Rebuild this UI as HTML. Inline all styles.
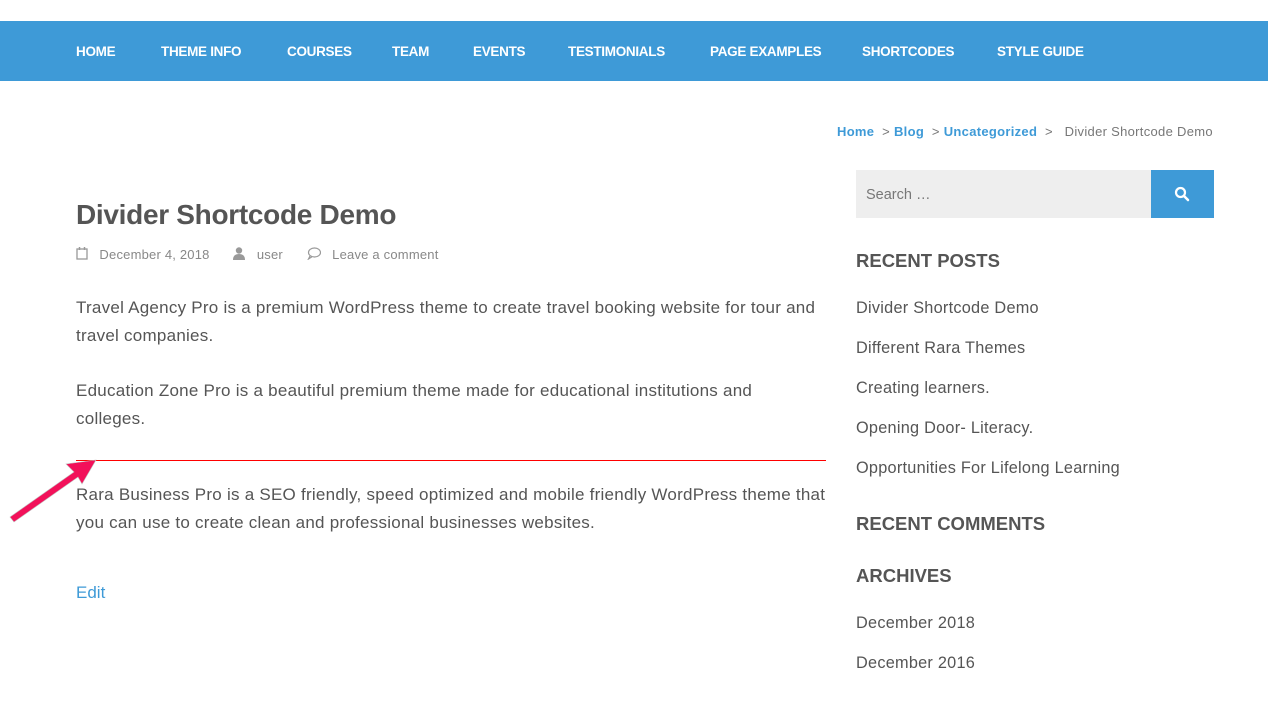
<!DOCTYPE html>
<html><head><meta charset="utf-8"><style>
*{margin:0;padding:0;box-sizing:border-box}
body{width:1268px;height:709px;overflow:hidden;background:#fff;font-family:"Liberation Sans",sans-serif;color:#555;position:relative}
.nav{position:absolute;top:21px;left:0;width:1268px;height:60px;background:#3e9ad7}
.nav span{position:absolute;top:23px;color:#fff;font-weight:bold;font-size:13.5px;letter-spacing:-0.3px}
.a{position:absolute;white-space:nowrap}
.bc{top:124px;font-size:13px;letter-spacing:0.3px}
.blue{color:#3e9ad7}
p.a{font-size:17px;line-height:28px;color:#555;letter-spacing:0.25px}
.side{font-size:16.3px;color:#555;letter-spacing:0.25px}
h2.a{font-size:18.5px;font-weight:bold;color:#555}
</style></head><body>
<div class="nav">
<span style="left:76px">HOME</span><span style="left:161px">THEME INFO</span><span style="left:287px">COURSES</span><span style="left:392px">TEAM</span><span style="left:473px">EVENTS</span><span style="left:568px">TESTIMONIALS</span><span style="left:710px">PAGE EXAMPLES</span><span style="left:862px">SHORTCODES</span><span style="left:997px">STYLE GUIDE</span>
</div>
<div class="a bc" style="left:837px"><b class="blue">Home</b> <span style="color:#777">&nbsp;&gt;</span> <b class="blue">Blog</b> <span style="color:#777">&nbsp;&gt;</span> <b class="blue">Uncategorized</b> <span style="color:#777">&nbsp;&gt;&nbsp;&nbsp; Divider Shortcode Demo</span></div>
<div class="a" style="left:76px;top:199px;font-size:28px;font-weight:bold;color:#555;letter-spacing:-0.3px">Divider Shortcode Demo</div>
<div class="a" style="left:76px;top:247px;font-size:13px;color:#888;letter-spacing:0.2px">
<svg width="12" height="13" style="vertical-align:-1px"><rect x="1" y="2" width="10" height="10" fill="none" stroke="#999" stroke-width="1.3"/><line x1="3.5" y1="0" x2="3.5" y2="3" stroke="#999" stroke-width="1.5"/><line x1="8.5" y1="0" x2="8.5" y2="3" stroke="#999" stroke-width="1.5"/></svg>&nbsp;&nbsp; December 4, 2018
<span style="display:inline-block;width:20px"></span><svg width="12" height="13" style="vertical-align:-1px"><circle cx="6" cy="3.5" r="3.2" fill="#999"/><path d="M0 13 Q0 7 6 7 Q12 7 12 13Z" fill="#999"/></svg>&nbsp;&nbsp; user
<span style="display:inline-block;width:20px"></span><svg width="14" height="13" style="vertical-align:-1px"><ellipse cx="7.5" cy="5.5" rx="6" ry="4.5" fill="none" stroke="#999" stroke-width="1.2"/><path d="M3 9 L1.5 12 L5 9.8" fill="none" stroke="#999" stroke-width="1.2"/></svg>&nbsp;&nbsp; Leave a comment</div>
<p class="a" style="left:76px;top:294px">Travel Agency Pro is a premium WordPress theme to create travel booking website for tour and<br>travel companies.</p>
<p class="a" style="left:76px;top:377px">Education Zone Pro is a beautiful premium theme made for educational institutions and<br>colleges.</p>
<div class="a" style="left:76px;top:460px;width:750px;height:1px;background:#f00"></div>
<svg class="a" style="left:0;top:450px" width="100" height="80"><path d="M10 67 L74 22 L66 14 L96 10 L82 34 L78 27 L14 72 Z" fill="#f2115a" stroke="#c0c0c0" stroke-width="0.6"/></svg>
<p class="a" style="left:76px;top:481px">Rara Business Pro is a SEO friendly, speed optimized and mobile friendly WordPress theme that<br>you can use to create clean and professional businesses websites.</p>
<div class="a blue" style="left:76px;top:583px;font-size:17px">Edit</div>
<div class="a" style="left:856px;top:170px;width:295px;height:48px;background:#eee"></div>
<div class="a" style="left:866px;top:187px;font-size:14.5px;color:#777">Search …</div>
<div class="a" style="left:1151px;top:170px;width:63px;height:48px;background:#3e9ad7"></div>
<svg class="a" style="left:1174px;top:186px" width="16" height="16"><circle cx="6.5" cy="6.5" r="4.5" fill="none" stroke="#fff" stroke-width="2.2"/><line x1="10" y1="10" x2="14" y2="14" stroke="#fff" stroke-width="2.5" stroke-linecap="round"/></svg>
<h2 class="a" style="left:856px;top:250px">RECENT POSTS</h2>
<div class="a side" style="left:856px;top:299px">Divider Shortcode Demo</div>
<div class="a side" style="left:856px;top:339px">Different Rara Themes</div>
<div class="a side" style="left:856px;top:379px">Creating learners.</div>
<div class="a side" style="left:856px;top:419px">Opening Door- Literacy.</div>
<div class="a side" style="left:856px;top:459px">Opportunities For Lifelong Learning</div>
<h2 class="a" style="left:856px;top:513px">RECENT COMMENTS</h2>
<h2 class="a" style="left:856px;top:565px">ARCHIVES</h2>
<div class="a side" style="left:856px;top:614px">December 2018</div>
<div class="a side" style="left:856px;top:654px">December 2016</div>
</body></html>
